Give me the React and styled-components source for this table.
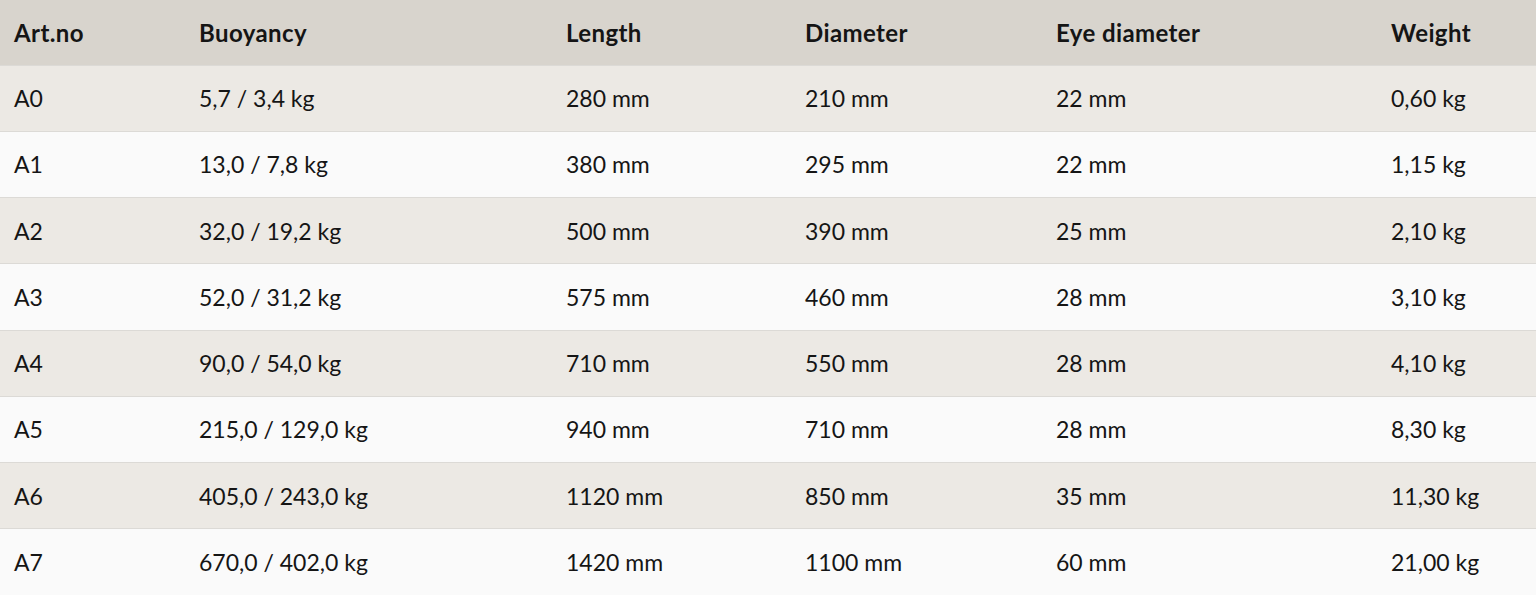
import React from 'react'
import styled, { createGlobalStyle } from 'styled-components'

const GlobalStyle = createGlobalStyle`
  html, body {
    margin: 0;
    padding: 0;
    background: #fff;
  }
`

const Table = styled.table`
  width: 1536px;
  border-collapse: collapse;
  table-layout: fixed;
  font-family: Lato, "Open Sans", sans-serif;
  font-size: 23px;
  color: #151515;
`

const HeadRow = styled.tr`
  background-color: #d8d4cd;
  height: 65px;
`

const Th = styled.th`
  text-align: left;
  font-weight: 700;
  font-size: 24px;
  letter-spacing: 0.4px;
  padding: 0 0 0 14px;
  vertical-align: middle;
`

const Row = styled.tr`
  height: 66.25px;
  background-color: ${({ $alt }) => ($alt ? '#ece9e4' : '#fafafa')};
  border-top: 1px solid #dcdad6;
`

const Td = styled.td`
  padding: 0 0 0 14px;
  vertical-align: middle;
`

const cols = [185, 367, 239, 251, 335, 159]
const headers = ['Art.no', 'Buoyancy', 'Length', 'Diameter', 'Eye diameter', 'Weight']

const rows = [
  ['A0', '5,7 / 3,4 kg', '280 mm', '210 mm', '22 mm', '0,60 kg'],
  ['A1', '13,0 / 7,8 kg', '380 mm', '295 mm', '22 mm', '1,15 kg'],
  ['A2', '32,0 / 19,2 kg', '500 mm', '390 mm', '25 mm', '2,10 kg'],
  ['A3', '52,0 / 31,2 kg', '575 mm', '460 mm', '28 mm', '3,10 kg'],
  ['A4', '90,0 / 54,0 kg', '710 mm', '550 mm', '28 mm', '4,10 kg'],
  ['A5', '215,0 / 129,0 kg', '940 mm', '710 mm', '28 mm', '8,30 kg'],
  ['A6', '405,0 / 243,0 kg', '1120 mm', '850 mm', '35 mm', '11,30 kg'],
  ['A7', '670,0 / 402,0 kg', '1420 mm', '1100 mm', '60 mm', '21,00 kg']
]

const App = () => {
  return (
    <>
      <GlobalStyle />
      <Table>
        <colgroup>
          {cols.map((w, i) => <col key={i} style={{ width: w }} />)}
        </colgroup>
        <thead>
          <HeadRow>
            {headers.map(h => <Th key={h}>{h}</Th>)}
          </HeadRow>
        </thead>
        <tbody>
          {rows.map((r, idx) => (
            <Row key={r[0]} $alt={idx % 2 === 0}>
              {r.map((c, i) => <Td key={i}>{c}</Td>)}
            </Row>
          ))}
        </tbody>
      </Table>
    </>
  )
}

export default App
